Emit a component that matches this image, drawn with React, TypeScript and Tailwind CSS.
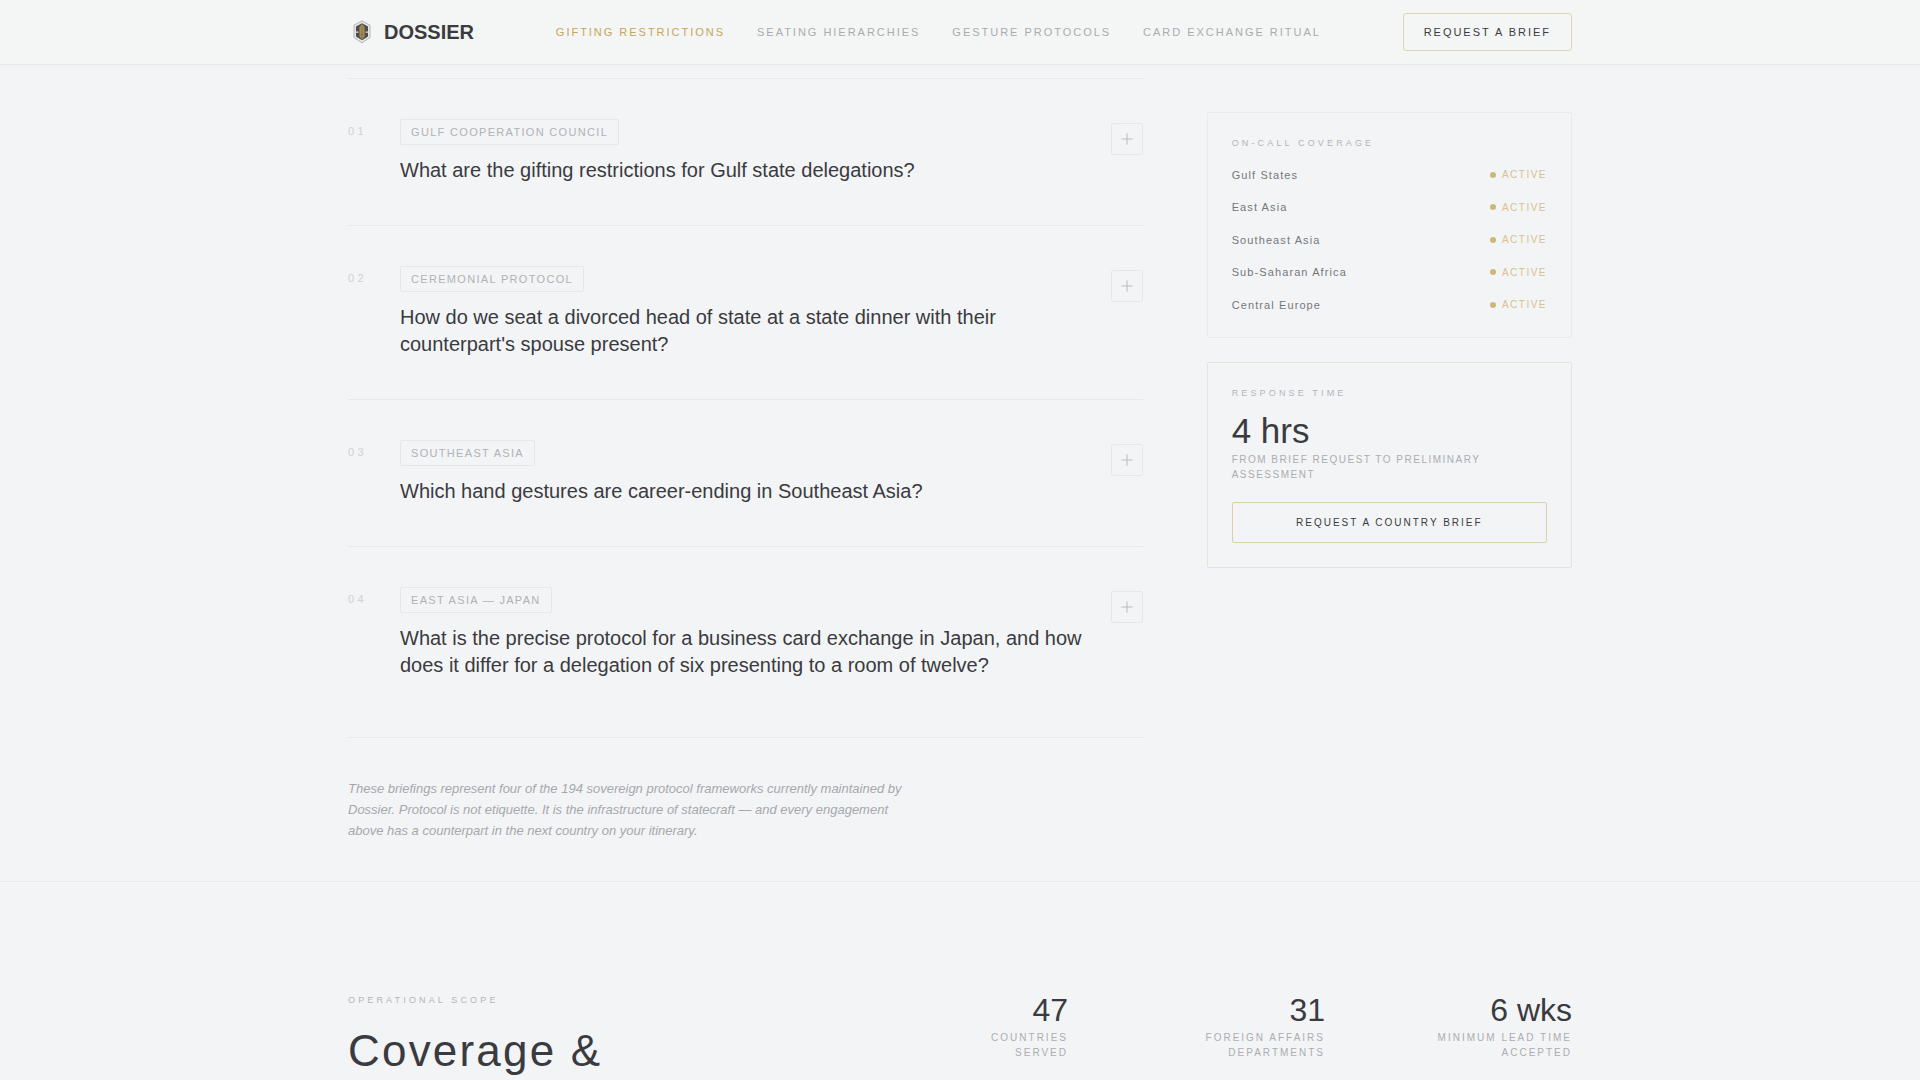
import { useState } from "react"
import { Plus } from "lucide-react"

interface Briefing {
    id: string
    tag: string
    question: string
}

interface Stat {
    value: string
    label: string
}

const links = [
    { label: "Gifting Restrictions", href: "#gifting" },
    { label: "Seating Hierarchies", href: "#seating" },
    { label: "Gesture Protocols", href: "#gestures" },
    { label: "Card Exchange Ritual", href: "#cards" },
]

const briefings: Briefing[] = [
    {
        id: "01",
        tag: "Gulf Cooperation Council",
        question: "What are the gifting restrictions for Gulf state delegations?",
    },
    {
        id: "02",
        tag: "Ceremonial Protocol",
        question: "How do we seat a divorced head of state at a state dinner with their counterpart's spouse present?",
    },
    {
        id: "03",
        tag: "Southeast Asia",
        question: "Which hand gestures are career-ending in Southeast Asia?",
    },
    {
        id: "04",
        tag: "East Asia — Japan",
        question: "What is the precise protocol for a business card exchange in Japan, and how does it differ for a delegation of six presenting to a room of twelve?",
    },
]

const regions = ["Gulf States", "East Asia", "Southeast Asia", "Sub-Saharan Africa", "Central Europe"]

const stats: Stat[] = [
    { value: "47", label: "Countries Served" },
    { value: "31", label: "Foreign Affairs Departments" },
    { value: "6 wks", label: "Minimum Lead Time Accepted" },
]

const Logo = () => (
    <svg width="28" height="28" viewBox="0 0 28 28" fill="none" aria-hidden="true">
        <path d="M14 2.8 22 7.2V19.6L14 24.8 6 19.6V7.2Z" fill="#e6e7e7" stroke="#b3b5b7" strokeWidth="1" />
        <path d="M14 5.2 20 8.5V18.4L14 22.3 8 18.4V8.5Z" fill="#4b4c50" />
        <path d="M8 14.2H10.5M17.5 14.2H20" stroke="#dcdddd" strokeWidth="1.2" />
        <path d="M14 6 16.6 9V18.4L14 21.6 11.4 18.4V9Z" fill="#a88d52" />
        <path d="M14 8V20M12.6 16.5H15.4" stroke="#7d6a3f" strokeWidth="0.8" />
    </svg>
)

const Header = () => (
    <header className="sticky top-0 z-50 border-b border-[#e5e7ea] bg-[#f4f6f5]">
        <div className="mx-auto flex h-16 max-w-[1320px] items-center justify-between px-12">
            <a href="#top" className="flex items-center gap-2 text-xl font-bold text-[#3a3b40]">
                <Logo />
                DOSSIER
            </a>
            <nav className="flex items-center gap-8">
                {links.map((link, i) => (
                    <a
                        key={link.href}
                        href={link.href}
                        className={`text-[11px] uppercase tracking-[0.18em] ${i === 0 ? "text-[#c4a55a]" : "text-[#a9abae]"}`}
                    >
                        {link.label}
                    </a>
                ))}
            </nav>
            <button className="rounded-[3px] border border-[#dfd3bb] px-5 py-[10px] text-[11px] uppercase leading-4 tracking-[0.18em] text-[#3a3b40]">
                Request a Brief
            </button>
        </div>
    </header>
)

const BriefingItem = ({ data, last }: { data: Briefing; last: boolean }) => {
    const [open, setOpen] = useState(false)

    return (
        <li className={`flex gap-6 pt-10 pb-[41px] ${last ? "" : "border-b border-[#e7e8eb]"}`}>
            <span className="w-7 pt-1 text-[11px] leading-4 tracking-[0.3em] text-[#cfd1d4]">{data.id}</span>
            <div className="flex-1">
                <span className="mb-3 block w-fit rounded-xs border border-[#e6e7ea] px-[10px] py-1 text-[11px] uppercase leading-4 tracking-[0.12em] text-[#b0b2b5]">
                    {data.tag}
                </span>
                <h3 className="text-xl leading-[27px] text-[#3a3b40]">{data.question}</h3>
            </div>
            <button
                aria-label={`Open briefing ${data.id}`}
                aria-expanded={open}
                onClick={() => setOpen(!open)}
                className="mt-1 flex size-8 items-center justify-center rounded-xs border border-[#e6e7ea]"
            >
                <Plus size={18} strokeWidth={1.4} className="text-[#b9bbbe]" />
            </button>
        </li>
    )
}

const Sidebar = () => (
    <aside className="sticky top-28 mt-[34px] flex flex-col gap-6 self-start">
        <section className="rounded-xs border border-[#e9eaed] p-6">
            <h2 className="mb-4 text-[9px] uppercase leading-normal tracking-[0.35em] text-[#b3b5b8]">On-call coverage</h2>
            <ul className="flex flex-col gap-4">
                {regions.map((region) => (
                    <li key={region} className="flex items-center justify-between text-[11px] leading-normal">
                        <span className="tracking-widest text-[#75777c]">{region}</span>
                        <span className="flex items-center gap-[6px] text-[10px] uppercase tracking-[0.15em] text-[#d6c28c]">
                            <span className="size-[6px] rounded-full bg-[#cdb878]" />
                            Active
                        </span>
                    </li>
                ))}
            </ul>
        </section>
        <section className="rounded-xs border border-[#e5e4dd] p-6">
            <h2 className="mb-3 text-[9px] uppercase leading-normal tracking-[0.35em] text-[#b3b5b8]">Response time</h2>
            <p className="mb-[3px] text-[35px] leading-9 text-[#3a3b40]">4 hrs</p>
            <p className="mb-5 text-[10px] uppercase leading-normal tracking-[0.15em] text-[#abadb0]">
                From brief request to preliminary assessment
            </p>
            <button className="w-full rounded-xs border border-[#dccfac] py-3 text-[10px] uppercase leading-normal tracking-[0.2em] text-[#3a3b40]">
                Request a Country Brief
            </button>
        </section>
    </aside>
)

const Scope = () => (
    <section className="border-t border-[#e7e8eb]">
        <div className="mx-auto flex max-w-[1320px] items-start justify-between px-12 py-28">
            <div>
                <p className="mb-5 text-[9px] uppercase leading-normal tracking-[0.35em] text-[#b3b5b8]">Operational scope</p>
                <h2 className="text-[44px] leading-[46px] tracking-[0.05em] text-[#3a3b40]">Coverage &amp;</h2>
            </div>
            <dl className="grid grid-cols-[120px_193px_183px] gap-16 text-right">
                {stats.map((stat) => (
                    <div key={stat.label} className="flex flex-col-reverse justify-end gap-1">
                        <dt className="text-[10px] uppercase leading-normal tracking-[0.2em] text-[#abadb0]">{stat.label}</dt>
                        <dd className="text-[32px] leading-none text-[#3a3b40]">{stat.value}</dd>
                    </div>
                ))}
            </dl>
        </div>
    </section>
)

export default function App() {
    return (
        <div id="top" className="min-h-screen bg-[#f3f4f6] font-['Liberation_Sans',Arial,sans-serif]">
            <Header />
            <main>
                <div className="mx-auto grid max-w-[1320px] grid-cols-3 gap-16 px-12 pt-[13px] pb-10">
                    <div className="col-span-2">
                        <ul className="border-t border-[#e7e8eb]">
                            {briefings.map((briefing, i) => (
                                <BriefingItem key={briefing.id} data={briefing} last={i === briefings.length - 1} />
                            ))}
                        </ul>
                        <div className="mt-[17px] border-t border-[#e7e8eb] pt-10">
                            <p className="max-w-[560px] text-[13px] italic leading-[21px] text-[#a6a8ac]">
                                These briefings represent four of the 194 sovereign protocol frameworks currently maintained by
                                Dossier. Protocol is not etiquette. It is the infrastructure of statecraft — and every engagement
                                above has a counterpart in the next country on your itinerary.
                            </p>
                        </div>
                    </div>
                    <Sidebar />
                </div>
                <Scope />
            </main>
        </div>
    )
}
